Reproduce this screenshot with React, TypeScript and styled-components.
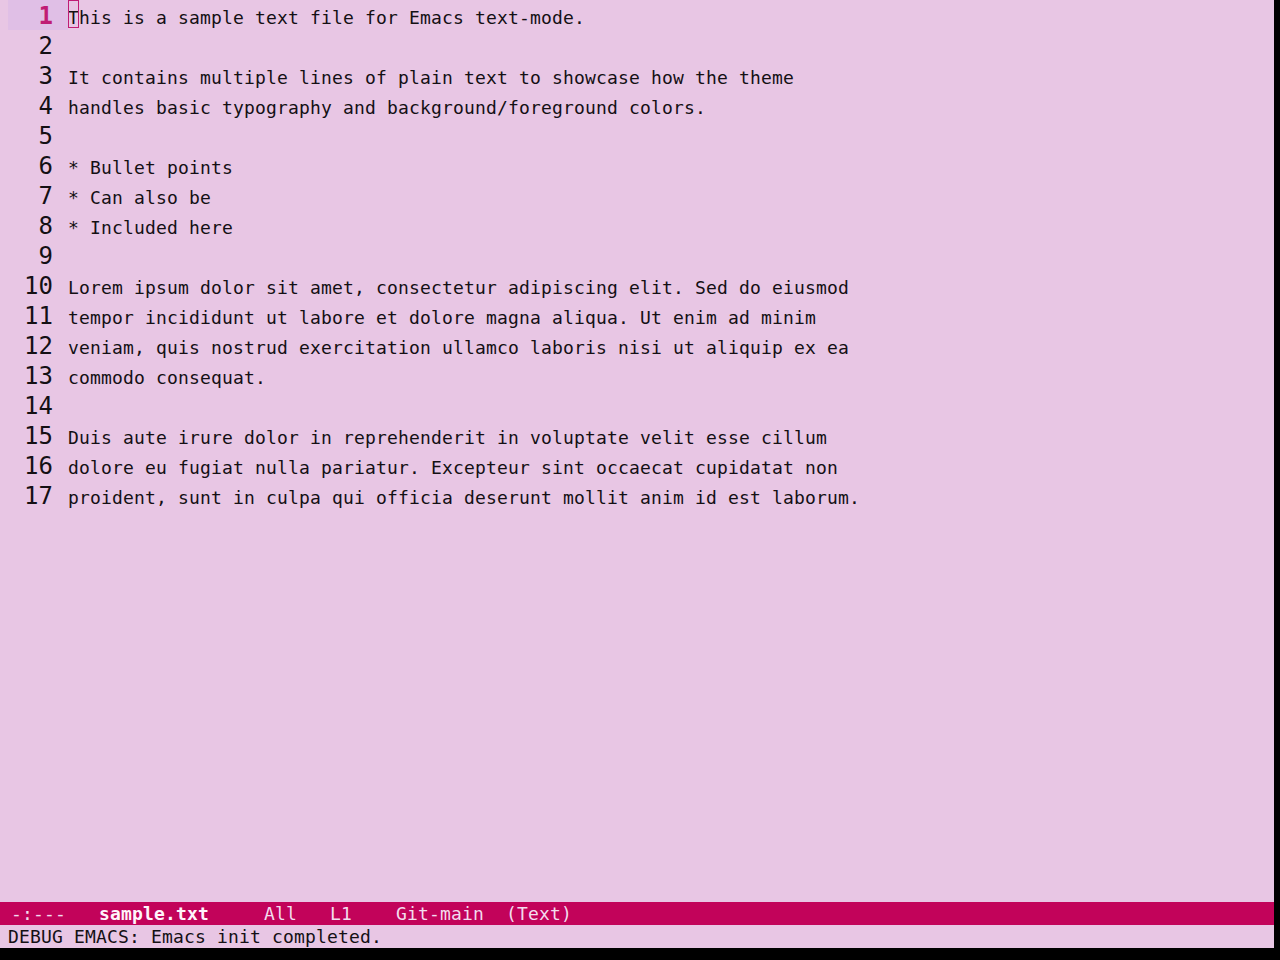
import React from "react";
import styled, { createGlobalStyle } from "styled-components";

const Global = createGlobalStyle`
  html, body { margin: 0; padding: 0; background: #000; }
  body { width: 1280px; height: 960px; overflow: hidden; }
`;

const Screen = styled.div`
  width: 1280px;
  height: 960px;
  background: #000;
  display: flex;
  flex-direction: column;
`;

const Frame = styled.div`
  width: 1274px;
  height: 948px;
  background: #e8c6e4;
  display: flex;
  flex-direction: column;
  font-family: "DejaVu Sans Mono", monospace;
  color: #141014;
`;

const Buffer = styled.div`
  flex: 1;
  display: flex;
  flex-direction: column;
  padding-left: 8px;
`;

const Row = styled.div`
  display: flex;
  align-items: baseline;
  height: 30px;
`;

const LineNo = styled.div<{ $current?: boolean }>`
  width: 60px;
  height: 30px;
  box-sizing: border-box;
  padding-top: 1px;
  padding-right: 15px;
  text-align: right;
  font-size: 24px;
  line-height: 30px;
  font-weight: ${(p) => (p.$current ? 700 : 400)};
  color: ${(p) => (p.$current ? "#c01c74" : "#141014")};
  background: ${(p) => (p.$current ? "#e0bfe6" : "transparent")};
`;

const Text = styled.div`
  font-size: 18px;
  letter-spacing: 0.164px;
  line-height: 30px;
  white-space: pre;
`;

const Cursor = styled.span`
  position: relative;
  &::after {
    content: "";
    position: absolute;
    left: 0;
    top: -7px;
    width: 11px;
    height: 28px;
    box-sizing: border-box;
    border: 1px solid #c01c74;
  }
`;

const ModeLine = styled.div`
  height: 23px;
  background: #c2035a;
  color: #f3dcee;
  font-size: 18px;
  letter-spacing: 0.164px;
  line-height: 23px;
  white-space: pre;
`;

const Bold = styled.span`
  font-weight: 700;
  color: #fff4fb;
`;

const Echo = styled.div`
  height: 23px;
  padding-left: 8px;
  font-size: 18px;
  letter-spacing: 0.164px;
  line-height: 23px;
  white-space: pre;
  color: #141014;
`;

const lines = [
  "This is a sample text file for Emacs text-mode.",
  "",
  "It contains multiple lines of plain text to showcase how the theme",
  "handles basic typography and background/foreground colors.",
  "",
  "* Bullet points",
  "* Can also be",
  "* Included here",
  "",
  "Lorem ipsum dolor sit amet, consectetur adipiscing elit. Sed do eiusmod",
  "tempor incididunt ut labore et dolore magna aliqua. Ut enim ad minim",
  "veniam, quis nostrud exercitation ullamco laboris nisi ut aliquip ex ea",
  "commodo consequat.",
  "",
  "Duis aute irure dolor in reprehenderit in voluptate velit esse cillum",
  "dolore eu fugiat nulla pariatur. Excepteur sint occaecat cupidatat non",
  "proident, sunt in culpa qui officia deserunt mollit anim id est laborum.",
];

export default function App() {
  return (
    <>
      <Global />
      <Screen>
        <Frame>
          <Buffer>
            {lines.map((l, i) => (
              <Row key={i}>
                <LineNo $current={i === 0}>{i + 1}</LineNo>
                <Text>
                  {i === 0 ? (
                    <>
                      <Cursor>{l[0]}</Cursor>
                      {l.slice(1)}
                    </>
                  ) : (
                    l || " "
                  )}
                </Text>
              </Row>
            ))}
          </Buffer>
          <ModeLine>
            {" -:---   "}
            <Bold>sample.txt</Bold>
            {"     All   L1    Git-main  (Text)"}
          </ModeLine>
          <Echo>DEBUG EMACS: Emacs init completed.</Echo>
        </Frame>
      </Screen>
    </>
  );
}
